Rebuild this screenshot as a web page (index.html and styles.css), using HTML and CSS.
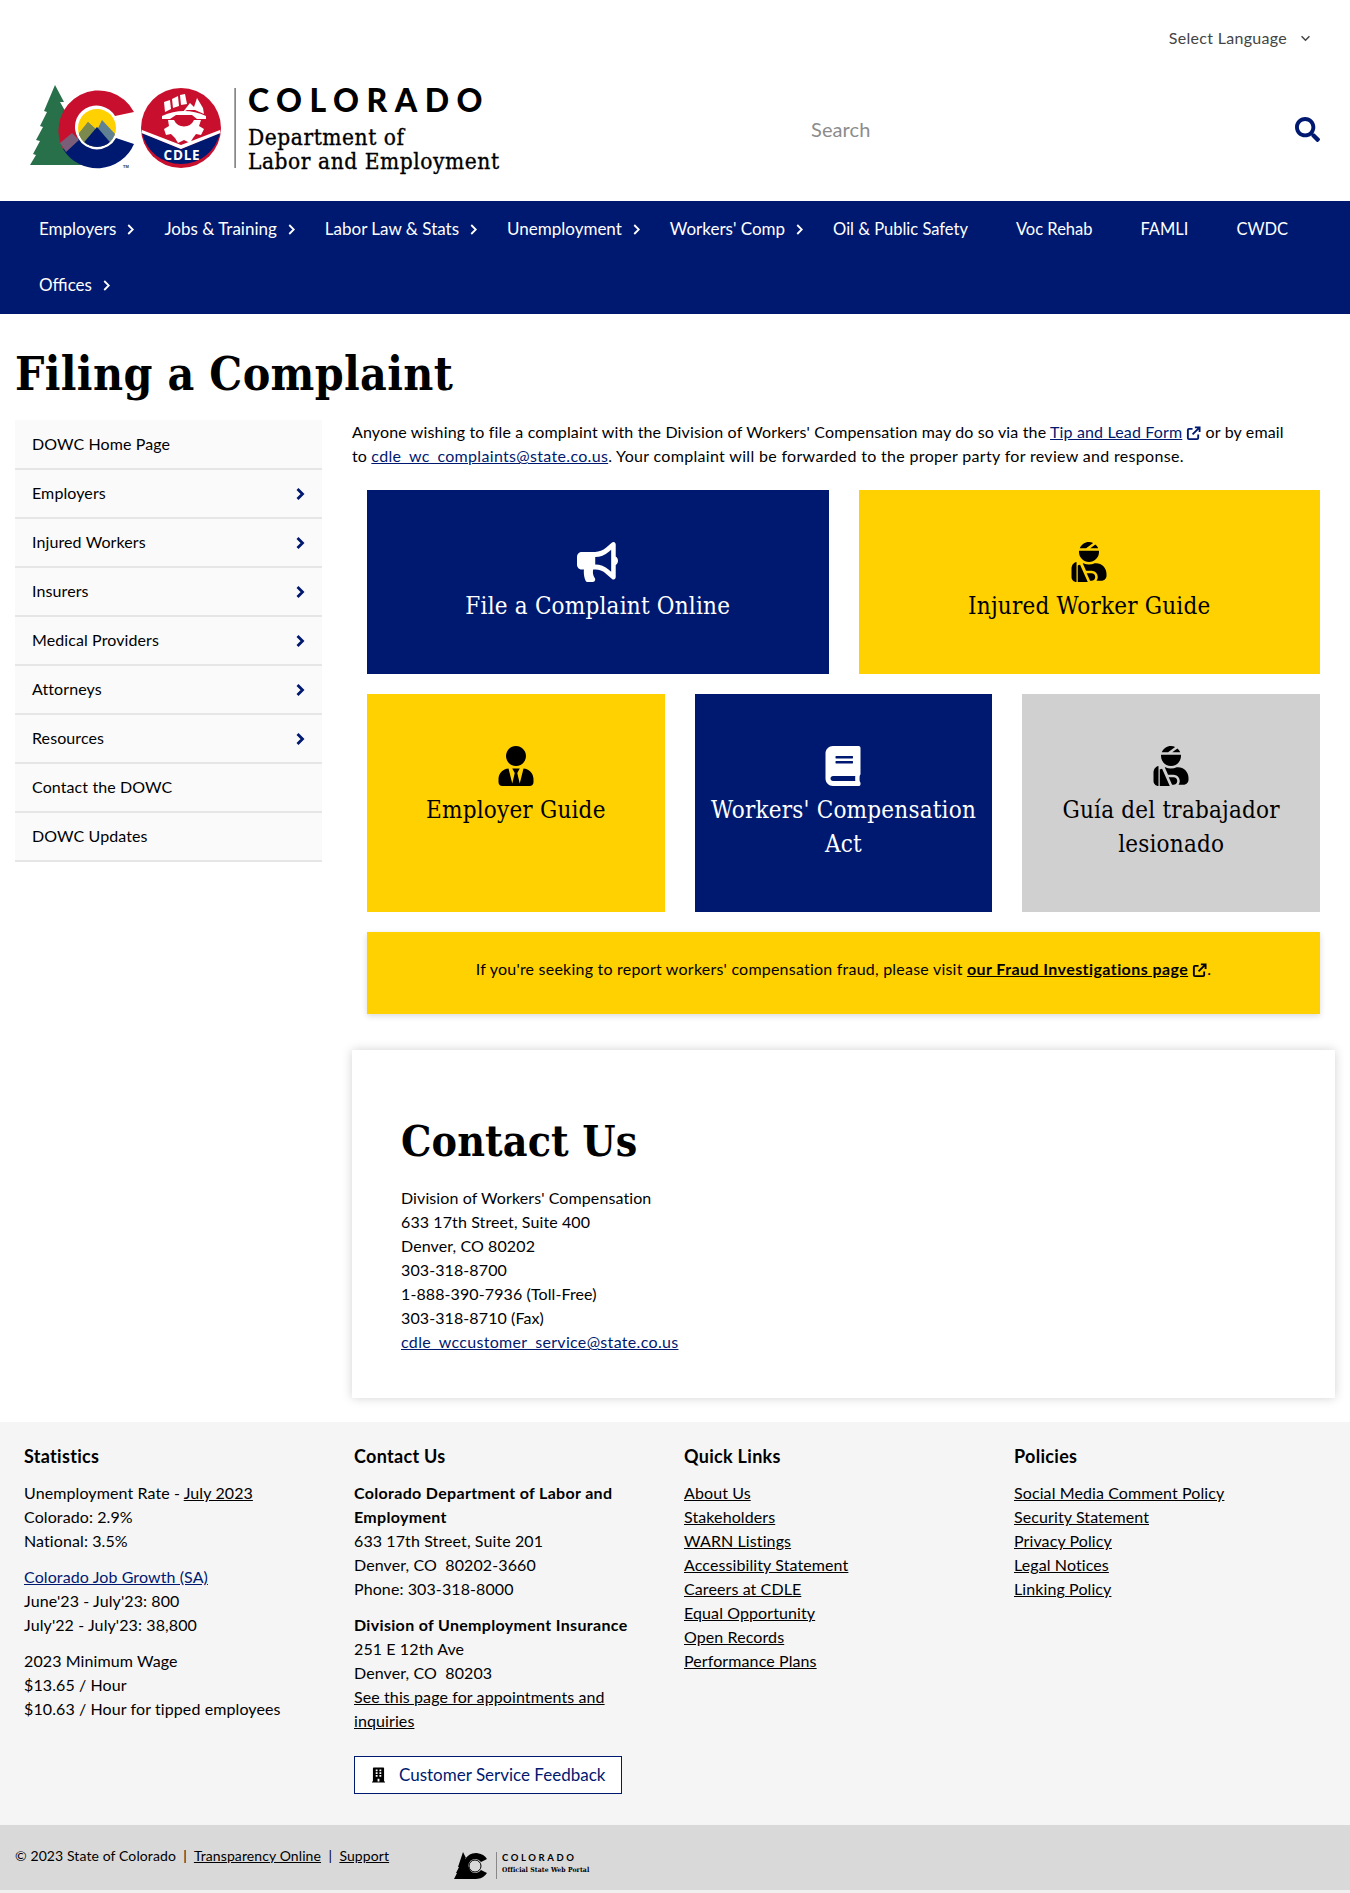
FILE: index.html
```html
<!DOCTYPE html>
<html lang="en">
<head>
<meta charset="utf-8">
<title>Filing a Complaint</title>
<link rel="stylesheet" href="styles.css">
</head>
<body>
<svg class="defs" width="0" height="0">
  <defs>
    <symbol id="i-injured" viewBox="0 0 448 512"><path d="M277.37 11.98C261.08 4.47 243.11 0 224 0c-53.69 0-99.5 33.13-118.51 80h81.19l90.69-68.02zM342.51 80c-7.9-19.47-20.67-36.2-36.49-49.52L239.99 80h102.52zM224 256c70.69 0 128-57.31 128-128 0-5.48-.95-10.7-1.61-16H97.61c-.67 5.3-1.61 10.52-1.61 16 0 70.69 57.31 128 128 128zM80 299.7V512h128.26l-98.45-221.52A132.835 132.835 0 0 0 80 299.7zM0 448c0 35.35 28.65 64 64 64V255.56C19.61 263.57 0 307.92 0 341.32V448zm256-48h-61.01l42.67 96H256c26.47 0 48-21.53 48-48s-21.53-48-48-48zm57.6-128h-16.71c-22.24 10.18-46.88 16-72.89 16s-50.65-5.82-72.89-16h-7.37l42.67 96H256c44.11 0 80 35.89 80 80 0 18.08-6.26 34.59-16.41 48H384c35.35 0 64-28.65 64-64V406.4c0-74.23-60.17-134.4-134.4-134.4z"/></symbol>
    <symbol id="i-chev" viewBox="0 0 10 14"><path d="M2.5 2 7.5 7l-5 5" fill="none" stroke="currentColor" stroke-width="2"/></symbol>
    <symbol id="i-chev-b" viewBox="0 0 10 14"><path d="M2.500 2 7.500 7l-5 5" fill="none" stroke="currentColor" stroke-width="2.800"/></symbol>
    <symbol id="i-ext" viewBox="0 0 16 16"><path d="M7 3H3.2A1.2 1.2 0 0 0 2 4.2v8.600A1.200 1.200 0 0 0 3.200 14h8.600a1.200 1.200 0 0 0 1.200-1.200V9" fill="none" stroke="currentColor" stroke-width="2"/><path d="M9.500 1.500h5v5M14.200 1.800 7 9" fill="none" stroke="currentColor" stroke-width="2"/></symbol>
    <clipPath id="c-mountain"><circle cx="97" cy="128" r="19"/></clipPath>
  </defs>
</svg>

<header class="masthead">
  <div class="lang-row">
    <span class="lang">Select Language</span>
    <svg class="lang-caret" viewBox="0 0 12 8" width="11" height="7"><path d="M1.500 1.500 6 6l4.500-4.500" fill="none" stroke="#444" stroke-width="1.700"/></svg>
  </div>
  <div class="brand-row">
    <a class="brand" href="#">
      <svg class="brand-mark" viewBox="25 84 212 88" width="212" height="88">
        <path d="M55 85 64 102 60 102 68 116 63 116 71 130 66 130 75 148 88 165H30l6-10-3-1 7-13-4-1 7-13-3-1 7-14-3-1z" fill="#28704a"/>
        <path d="M134 112A40 40 0 1 0 63 149L78 138A21.500 21.500 0 0 1 115 116Z" fill="#c8102e"/>
        <path d="M63 149A40 40 0 0 0 134 144L116 138A21.500 21.500 0 0 1 78 138Z" fill="#001970"/>
        <path d="M60 143 72 133 79 140 66 152Z" fill="#7a5d78"/>
        <g clip-path="url(#c-mountain)">
          <rect x="78" y="109" width="38" height="38" fill="#ffd100"/>
          <path d="M76 137 88 122 97 130 102 120 118 137V147H76Z" fill="#5f8191"/>
          <path d="M76 137 88 122 100 134 90 147H76Z" fill="#7b8a4c"/>
          <path d="M80 147 97 127 114 147Z" fill="#001970"/>
        </g>
        <circle cx="181" cy="128" r="40" fill="#c8102e"/>
        <path d="M142 133 181 149 220 133A40 40 0 0 1 142 133Z" fill="#001970"/>
        <path d="M142 130 181 145 220 130 220.500 133 181 149 141.500 133Z" fill="#fff"/>
        <path d="M164 102l6-2 1 9-6 3ZM172 99l6-3 1 10-6 2ZM180 95l5-1 2 10-6 1Z" fill="#fff"/>
        <path d="M183 112 190 103 194 107 197 98 203 108 204 114 195 110 187 110Z" fill="#fff"/>
        <path d="M162 116Q184 106 206 116V119H197L192 115H176L170 119H162Z" fill="#fff"/>
        <path d="M168 120H174A11 11 0 0 0 194 120H201L199 126 204 129 201 135 196 134 193 138 190 143 184 140 178 143 175 138 171 134 166 135 164 129 169 126Z" fill="#fff"/>
        <text class="mark-cdle" x="182" y="160" text-anchor="middle">CDLE</text>
        <text class="mark-tm" x="123" y="168">TM</text>
        <rect x="234.500" y="88" width="1.200" height="80" fill="#555"/>
      </svg>
      <span class="brand-text">
        <span class="brand-state">COLORADO</span>
        <span class="brand-dept">Department of<br>Labor and Employment</span>
      </span>
    </a>
    <form class="search">
      <span class="search-ph">Search</span>
      <svg class="search-ic" viewBox="0 0 512 512" width="25" height="25"><path d="M505 442.700L405.300 343c-4.500-4.500-10.600-7-17-7H372c27.600-35.300 44-79.700 44-128C416 93.100 322.900 0 208 0S0 93.100 0 208s93.100 208 208 208c48.300 0 92.700-16.400 128-44v16.300c0 6.400 2.500 12.500 7 17l99.700 99.700c9.400 9.400 24.600 9.400 33.900 0l28.300-28.300c9.400-9.400 9.400-24.600.1-34zM208 336c-70.700 0-128-57.200-128-128 0-70.700 57.200-128 128-128 70.700 0 128 57.200 128 128 0 70.700-57.200 128-128 128z"/></svg>
    </form>
  </div>
</header>

<nav class="mainnav">
  <a class="nav-item" href="#">Employers<svg class="nav-chev"><use href="#i-chev"/></svg></a>
  <a class="nav-item" href="#">Jobs &amp; Training<svg class="nav-chev"><use href="#i-chev"/></svg></a>
  <a class="nav-item" href="#">Labor Law &amp; Stats<svg class="nav-chev"><use href="#i-chev"/></svg></a>
  <a class="nav-item" href="#">Unemployment<svg class="nav-chev"><use href="#i-chev"/></svg></a>
  <a class="nav-item" href="#">Workers' Comp<svg class="nav-chev"><use href="#i-chev"/></svg></a>
  <a class="nav-item nav-plain" href="#">Oil &amp; Public Safety</a>
  <a class="nav-item nav-plain" href="#">Voc Rehab</a>
  <a class="nav-item nav-plain" href="#">FAMLI</a>
  <a class="nav-item nav-plain" href="#">CWDC</a>
  <a class="nav-item" href="#">Offices<svg class="nav-chev"><use href="#i-chev"/></svg></a>
</nav>

<h1 class="page-title">Filing a Complaint</h1>

<div class="page-body">
  <aside class="sidenav">
    <a class="side-item" href="#">DOWC Home Page</a>
    <a class="side-item" href="#">Employers<svg class="side-chev"><use href="#i-chev-b"/></svg></a>
    <a class="side-item" href="#">Injured Workers<svg class="side-chev"><use href="#i-chev-b"/></svg></a>
    <a class="side-item" href="#">Insurers<svg class="side-chev"><use href="#i-chev-b"/></svg></a>
    <a class="side-item" href="#">Medical Providers<svg class="side-chev"><use href="#i-chev-b"/></svg></a>
    <a class="side-item" href="#">Attorneys<svg class="side-chev"><use href="#i-chev-b"/></svg></a>
    <a class="side-item" href="#">Resources<svg class="side-chev"><use href="#i-chev-b"/></svg></a>
    <a class="side-item" href="#">Contact the DOWC</a>
    <a class="side-item" href="#">DOWC Updates</a>
  </aside>

  <main class="content">
    <p class="intro">Anyone wishing to file a complaint with the Division of Workers' Compensation may do so via the <a class="link" href="#">Tip and Lead Form</a><svg class="ext ext-navy"><use href="#i-ext"/></svg> or by email to <a class="link link-wide" href="#">cdle_wc_complaints@state.co.us</a><span class="intro-tail">. Your complaint will be forwarded to the proper party for review and response.</span></p>

    <div class="tiles">
      <div class="tile-row tile-row-2">
        <a class="tile tile-navy" href="#">
          <svg class="tile-ic tile-horn" viewBox="0 0 576 512" preserveAspectRatio="none"><path d="M576 240c0-23.630-12.950-44.040-32-55.120V32.010C544 23.260 537.020 0 512 0c-7.120 0-14.190 2.380-19.980 7.020l-85.030 68.030C364.280 109.190 310.660 128 256 128H64c-35.350 0-64 28.650-64 64v96c0 35.350 28.650 64 64 64h33.700c-1.390 10.480-2.180 21.140-2.180 32 0 39.770 9.260 77.350 25.560 110.940 5.190 10.690 16.520 17.060 28.400 17.060h74.280c26.050 0 41.690-29.840 25.900-50.560-16.400-21.520-26.150-48.360-26.150-77.440 0-11.110 1.620-21.790 4.410-32H256c54.660 0 108.280 18.810 150.980 52.950l85.030 68.030a32.023 32.023 0 0 0 19.980 7.020c24.920 0 32-22.780 32-32V295.130C563.050 284.040 576 263.630 576 240zm-96 141.420l-33.050-26.440C392.950 311.780 325.120 288 256 288v-96c69.120 0 136.950-23.780 190.950-66.980L480 98.580v282.840z"/></svg>
          <span class="tile-label">File a Complaint Online</span>
        </a>
        <a class="tile tile-gold" href="#">
          <svg class="tile-ic"><use href="#i-injured"/></svg>
          <span class="tile-label">Injured Worker Guide</span>
        </a>
      </div>
      <div class="tile-row tile-row-3">
        <a class="tile tile-gold" href="#">
          <svg class="tile-ic" viewBox="0 0 448 512"><path d="M224 256c70.700 0 128-57.300 128-128S294.700 0 224 0 96 57.300 96 128s57.300 128 128 128zm95.800 32.600L272 480l-32-136 32-56h-96l32 56-32 136-47.800-191.400C56.900 292 0 350.300 0 422.400V464c0 26.500 21.500 48 48 48h352c26.500 0 48-21.500 48-48v-41.600c0-72.100-56.900-130.400-128.200-133.800z"/></svg>
          <span class="tile-label">Employer Guide</span>
        </a>
        <a class="tile tile-navy" href="#">
          <svg class="tile-ic" viewBox="0 0 448 512"><path d="M448 360V24c0-13.300-10.700-24-24-24H96C43 0 0 43 0 96v320c0 53 43 96 96 96h328c13.300 0 24-10.700 24-24v-16c0-7.500-3.500-14.300-8.900-18.700-4.200-15.400-4.200-59.300 0-74.700 5.400-4.300 8.900-11.100 8.900-18.600zM128 134c0-3.300 2.700-6 6-6h212c3.300 0 6 2.700 6 6v20c0 3.300-2.700 6-6 6H134c-3.300 0-6-2.700-6-6v-20zm0 64c0-3.300 2.700-6 6-6h212c3.300 0 6 2.700 6 6v20c0 3.300-2.700 6-6 6H134c-3.300 0-6-2.700-6-6v-20zm253.400 250H96c-17.700 0-32-14.300-32-32 0-17.600 14.400-32 32-32h285.400c-1.900 17.100-1.900 46.900 0 64z"/></svg>
          <span class="tile-label">Workers' Compensation Act</span>
        </a>
        <a class="tile tile-grey" href="#">
          <svg class="tile-ic"><use href="#i-injured"/></svg>
          <span class="tile-label">Guía del trabajador lesionado</span>
        </a>
      </div>
      <div class="fraud">If you're seeking to report workers' compensation fraud, please visit <a class="fraud-link" href="#">our Fraud Investigations page</a><svg class="ext ext-black"><use href="#i-ext"/></svg>.</div>
    </div>

    <section class="contact-card">
      <h2 class="contact-title">Contact Us</h2>
      <p class="contact-lines">Division of Workers' Compensation<br>633 17th Street, Suite 400<br>Denver, CO 80202<br>303-318-8700<br>1-888-390-7936 (Toll-Free)<br>303-318-8710 (Fax)<br><a class="link link-wide" href="#">cdle_wccustomer_service@state.co.us</a></p>
    </section>
  </main>
</div>

<footer class="site-footer">
  <div class="foot-cols">
    <div class="foot-col">
      <h3 class="foot-h">Statistics</h3>
      <p class="foot-p">Unemployment Rate - <a class="ulink" href="#">July 2023</a><br>Colorado: 2.9%<br>National: 3.5%</p>
      <p class="foot-p"><a class="link" href="#">Colorado Job Growth (SA)</a><br>June'23 - July'23: 800<br>July'22 - July'23: 38,800</p>
      <p class="foot-p">2023 Minimum Wage<br>$13.65 / Hour<br>$10.63 / Hour for tipped employees</p>
    </div>
    <div class="foot-col">
      <h3 class="foot-h">Contact Us</h3>
      <p class="foot-p"><strong class="foot-strong">Colorado Department of Labor and Employment</strong><br>633 17th Street, Suite 201<br>Denver, CO&nbsp; 80202-3660<br>Phone: 303-318-8000</p>
      <p class="foot-p"><strong class="foot-strong">Division of Unemployment Insurance</strong><br>251 E 12th Ave<br>Denver, CO&nbsp; 80203<br><a class="ulink" href="#">See this page for appointments and inquiries</a></p>
      <a class="feedback" href="#"><svg class="feedback-ic" viewBox="0 0 448 512"><path d="M436 480h-20V24c0-13.255-10.745-24-24-24H56C42.745 0 32 10.745 32 24v456H12c-6.627 0-12 5.373-12 12v20h448v-20c0-6.627-5.373-12-12-12zM128 76c0-6.627 5.373-12 12-12h40c6.627 0 12 5.373 12 12v40c0 6.627-5.373 12-12 12h-40c-6.627 0-12-5.373-12-12V76zm0 96c0-6.627 5.373-12 12-12h40c6.627 0 12 5.373 12 12v40c0 6.627-5.373 12-12 12h-40c-6.627 0-12-5.373-12-12v-40zm52 148h-40c-6.627 0-12-5.373-12-12v-40c0-6.627 5.373-12 12-12h40c6.627 0 12 5.373 12 12v40c0 6.627-5.373 12-12 12zm76 160h-64v-84c0-6.627 5.373-12 12-12h40c6.627 0 12 5.373 12 12v84zm64-172c0 6.627-5.373 12-12 12h-40c-6.627 0-12-5.373-12-12v-40c0-6.627 5.373-12 12-12h40c6.627 0 12 5.373 12 12v40zm0-96c0 6.627-5.373 12-12 12h-40c-6.627 0-12-5.373-12-12v-40c0-6.627 5.373-12 12-12h40c6.627 0 12 5.373 12 12v40zm0-96c0 6.627-5.373 12-12 12h-40c-6.627 0-12-5.373-12-12V76c0-6.627 5.373-12 12-12h40c6.627 0 12 5.373 12 12v40z"/></svg>Customer Service Feedback</a>
    </div>
    <div class="foot-col">
      <h3 class="foot-h">Quick Links</h3>
      <ul class="foot-list">
        <li><a class="ulink" href="#">About Us</a></li>
        <li><a class="ulink" href="#">Stakeholders</a></li>
        <li><a class="ulink" href="#">WARN Listings</a></li>
        <li><a class="ulink" href="#">Accessibility Statement</a></li>
        <li><a class="ulink" href="#">Careers at CDLE</a></li>
        <li><a class="ulink" href="#">Equal Opportunity</a></li>
        <li><a class="ulink" href="#">Open Records</a></li>
        <li><a class="ulink" href="#">Performance Plans</a></li>
      </ul>
    </div>
    <div class="foot-col">
      <h3 class="foot-h">Policies</h3>
      <ul class="foot-list">
        <li><a class="ulink" href="#">Social Media Comment Policy</a></li>
        <li><a class="ulink" href="#">Security Statement</a></li>
        <li><a class="ulink" href="#">Privacy Policy</a></li>
        <li><a class="ulink" href="#">Legal Notices</a></li>
        <li><a class="ulink" href="#">Linking Policy</a></li>
      </ul>
    </div>
  </div>
  <div class="foot-bar">
    <p class="foot-legal">© 2023 State of Colorado &nbsp;|&nbsp; <a class="ulink" href="#">Transparency Online</a> &nbsp;|&nbsp; <a class="ulink" href="#">Support</a></p>
    <div class="portal">
      <svg class="portal-mark" viewBox="0 0 36 28" width="36" height="28">
        <path d="M9 0l3 6-1 0 3 6-1 0 3 6 5 9H0l3-6-1 0 3-6-1 0z" fill="#000"/>
        <path d="M33 7A13 13 0 1 0 33 21L27 18A7 7 0 1 1 27 10Z" fill="#000"/>
        <circle cx="21" cy="14" r="6" fill="none" stroke="#000" stroke-width="1"/>
      </svg>
      <span class="portal-rule"></span>
      <span class="portal-text"><span class="portal-state">COLORADO</span><span class="portal-sub">Official State Web Portal</span></span>
    </div>
  </div>
</footer>
</body>
</html>
```

FILE: styles.css
```css
* { box-sizing: border-box; }
html, body { margin: 0; padding: 0; }
body {
  font-family: "Lato", "Liberation Sans", sans-serif;
  font-size: 16px;
  line-height: 24px;
  letter-spacing: .1px;
  color: #000;
  background: #fff;
}
.defs { position: absolute; }
a { color: inherit; text-decoration: none; }
.link { color: #001970; text-decoration: underline; }
.link-wide { letter-spacing: .32px; }
.ulink { color: #000; text-decoration: underline; }

/* masthead */
.masthead { height: 201px; display: flex; flex-direction: column; }
.lang-row { display: flex; justify-content: flex-end; align-items: center; height: 76px; padding-right: 39px; gap: 13px; }
.lang { color: #444; letter-spacing: .3px; }
.brand-row { display: flex; justify-content: space-between; align-items: flex-start; }
.brand { display: flex; align-items: flex-start; margin: 8px 0 0 25px; }
.brand-mark { display: block; flex: none; }
.mark-cdle { font: 700 13.500px "Open Sans", sans-serif; letter-spacing: .8px; fill: #fff; }
.mark-tm { font: 700 4px "Liberation Sans", sans-serif; fill: #333; }
.brand-text { display: flex; flex-direction: column; margin-left: 11px; }
.brand-state { font: 900 32px/32px "Lato", sans-serif; letter-spacing: 7.500px; }
.brand-dept { font: 400 22.500px/24px "DejaVu Serif Condensed", "DejaVu Serif", serif; margin-top: 9px; letter-spacing: .55px; -webkit-text-stroke: .35px #000; }
.search { width: 539px; height: 44px; margin: 31px 0 0 0; padding: 0 30px 0 0; display: flex; justify-content: space-between; align-items: center; }
.search-ph { font-size: 20px; color: #8c8c8c; }
.search-ic { fill: #001970; }

/* nav */
.mainnav { background: #001970; color: #fff; padding: 0 15px; display: flex; flex-wrap: wrap; align-content: flex-start; height: 113px; }
.nav-item { position: relative; display: block; height: 55.500px; line-height: 56px; padding: 0 24px; font-size: 17px; letter-spacing: 0; }
.nav-plain { font-size: 16.500px; }
.nav-chev { position: absolute; right: 5px; top: 22px; width: 9px; height: 13px; color: #fff; }

.page-title { font: 700 46px/56px "DejaVu Serif Condensed", "DejaVu Serif", serif; letter-spacing: .35px; margin: 0; padding: 32px 15px 18px; height: 106px; }

.page-body { display: flex; gap: 30px; padding: 0 15px; align-items: flex-start; }
.sidenav { width: 307px; flex: none; display: flex; flex-direction: column; }
.side-item { position: relative; height: 49px; line-height: 46px; padding: 0 17px; background: #fafafa; border-bottom: 2px solid #e6e6e6; }
.side-item:first-child { height: 50px; line-height: 47px; }
.side-chev { position: absolute; right: 17px; top: 17px; width: 10px; height: 14px; color: #001970; }

.content { flex: 1; min-width: 0; }
.intro { margin: 0; padding-right: 40px; letter-spacing: .15px; }
.intro-tail { letter-spacing: .32px; }
.ext { width: 15px; height: 15px; vertical-align: -3px; margin-left: 4px; }
.ext-navy { color: #001970; }
.ext-black { color: #000; }

.tiles { padding: 22px 15px 0; display: flex; flex-direction: column; gap: 20px; }
.tile-row { display: grid; }
.tile-row-2 { grid-template-columns: 1fr 1fr; column-gap: 30px; height: 184px; }
.tile-row-3 { grid-template-columns: 1fr 1fr 1fr; column-gap: 30px; height: 218px; }
.tile { display: flex; flex-direction: column; align-items: center; padding: 52px 8px 0; text-align: center; }
.tile-navy { background: #001970; color: #fff; }
.tile-gold { background: #ffd100; color: #000; }
.tile-grey { background: #d0d0d0; color: #000; }
.tile-ic { width: 36px; height: 40px; fill: currentColor; display: block; flex: none; }
.tile-horn { width: 41px; }
.tile-label { font: 400 24px/34px "DejaVu Serif Condensed", "DejaVu Serif", serif; letter-spacing: .2px; margin-top: 7px; }
.fraud { background: #ffd100; height: 82px; display: block; text-align: center; padding-top: 25px; letter-spacing: .22px; box-shadow: 0 2px 6px rgba(0,0,0,.15); }
.fraud-link { font-weight: 700; text-decoration: underline; letter-spacing: .42px; }

.contact-card { margin-top: 36px; height: 348px; padding: 66px 49px 0; background: #fff; box-shadow: 0 0 10px rgba(0,0,0,.18); }
.contact-title { font: 700 42.500px/50px "DejaVu Serif Condensed", "DejaVu Serif", serif; margin: 0 0 20px; }
.contact-lines { margin: 0; }

/* footer */
.site-footer { margin-top: 24px; background: #f5f5f5; }
.foot-cols { display: grid; grid-template-columns: repeat(4, 330px); padding: 20px 24px 0; height: 403px; }
.foot-col { padding-right: 30px; }
.foot-h { font-size: 18px; line-height: 28px; font-weight: 700; letter-spacing: .3px; margin: 0 0 11px; }
.foot-p { margin: 0 0 12px; }
.foot-strong { font-weight: 700; letter-spacing: .32px; }
.foot-list { list-style: none; margin: 0; padding: 0; }
.feedback { display: inline-flex; align-items: center; width: 268px; height: 38px; border: 1px solid #001970; background: #fff; color: #001970; font-size: 17px; letter-spacing: 0; padding-left: 17px; margin-top: 11px; }
.feedback-ic { width: 13px; height: 16px; fill: #000; margin-right: 14px; }
.foot-bar { display: flex; background: #d9d9d9; height: 68px; padding: 19px 15px 0; border-bottom: 3px solid #f0f0f0; font-size: 14px; }
.foot-legal { margin: 0; width: 439px; }
.portal { display: flex; align-items: flex-start; margin-top: 8px; }
.portal-mark { display: block; }
.portal-rule { width: 1px; height: 27px; background: #888; margin: 0 5px 0 6px; }
.portal-text { display: flex; flex-direction: column; color: #000; }
.portal-state { font: 700 9.500px/12px "Lato", sans-serif; letter-spacing: 2.600px; }
.portal-sub { font: 700 6.800px/12px "DejaVu Serif Condensed", "DejaVu Serif", serif; }
```
